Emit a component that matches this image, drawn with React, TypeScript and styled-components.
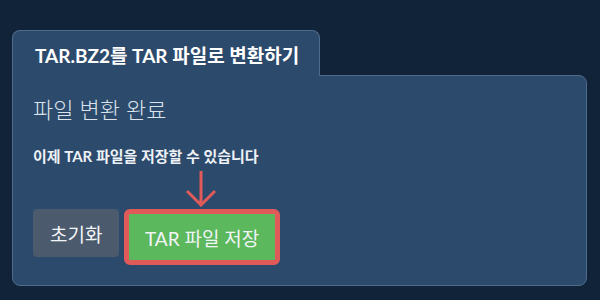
import React from "react";
import styled, { createGlobalStyle } from "styled-components";

const GlobalStyle = createGlobalStyle`
  html, body {
    margin: 0;
    padding: 0;
    background: #112339;
  }
  body {
    font-family: Lato, "Noto Sans CJK KR", sans-serif;
    color: #e9eef4;
  }
`;

const Page = styled.div`
  width: 600px;
  height: 300px;
  box-sizing: border-box;
  padding: 30px 13px 0 12px;
`;

const Card = styled.div`
  display: flex;
  flex-direction: column;
`;

const Tab = styled.div`
  position: relative;
  z-index: 1;
  width: 308px;
  height: 46px;
  box-sizing: border-box;
  margin-bottom: -1px;
  padding: 14px 0 0 22px;
  background: #2c4a6b;
  border: 1px solid #4f6b8b;
  border-bottom: none;
  border-radius: 8px 8px 0 0;
  font-size: 19px;
  font-weight: 700;
  color: #ffffff;
  line-height: 22px;
  white-space: nowrap;
`;

const Panel = styled.div`
  height: 211px;
  box-sizing: border-box;
  padding: 20px 20px 0 20px;
  background: #2c4a6b;
  border: 1px solid #4f6b8b;
  border-radius: 0 8px 8px 8px;
`;

const Heading = styled.h2`
  margin: 0;
  font-size: 22px;
  font-weight: 300;
  line-height: 28px;
  color: #dbe3ec;
`;

const Message = styled.p`
  margin: 22px 0 0;
  font-size: 15px;
  font-weight: 700;
  line-height: 20px;
  color: #eef2f7;
  white-space: nowrap;
`;

const Actions = styled.div`
  position: relative;
  display: flex;
  align-items: flex-start;
  gap: 5px;
  margin-top: 43px;
`;

const Button = styled.button<{ $variant: "reset" | "save" }>`
  box-sizing: border-box;
  height: ${(p) => (p.$variant === "save" ? "56px" : "48px")};
  padding: 0 ${(p) => (p.$variant === "save" ? "15.5px" : "17px")};
  border: ${(p) => (p.$variant === "save" ? "5px solid #e05a5a" : "none")};
  border-radius: ${(p) => (p.$variant === "save" ? "6px" : "4px")};
  background: ${(p) => (p.$variant === "save" ? "#5cb85c" : "#4b5a6c")};
  color: #f2f5f8;
  font-family: Lato, "Noto Sans CJK KR", sans-serif;
  font-size: 19px;
  font-weight: 400;
  white-space: nowrap;
  cursor: pointer;
`;

const Pointer = styled.svg`
  position: absolute;
  left: 153px;
  top: -38px;
`;

export default function App() {
  return (
    <>
      <GlobalStyle />
      <Page>
        <Card>
          <Tab>TAR.BZ2를 TAR 파일로 변환하기</Tab>
          <Panel>
            <Heading>파일 변환 완료</Heading>
            <Message>이제 TAR 파일을 저장할 수 있습니다</Message>
            <Actions>
              <Pointer width="30" height="36" viewBox="0 0 30 36">
                <path
                  d="M15 0 V34 M1 20 L15 34 L29 20"
                  fill="none"
                  stroke="#e05a5a"
                  strokeWidth="3"
                />
              </Pointer>
              <Button $variant="reset">초기화</Button>
              <Button $variant="save">TAR 파일 저장</Button>
            </Actions>
          </Panel>
        </Card>
      </Page>
    </>
  );
}
